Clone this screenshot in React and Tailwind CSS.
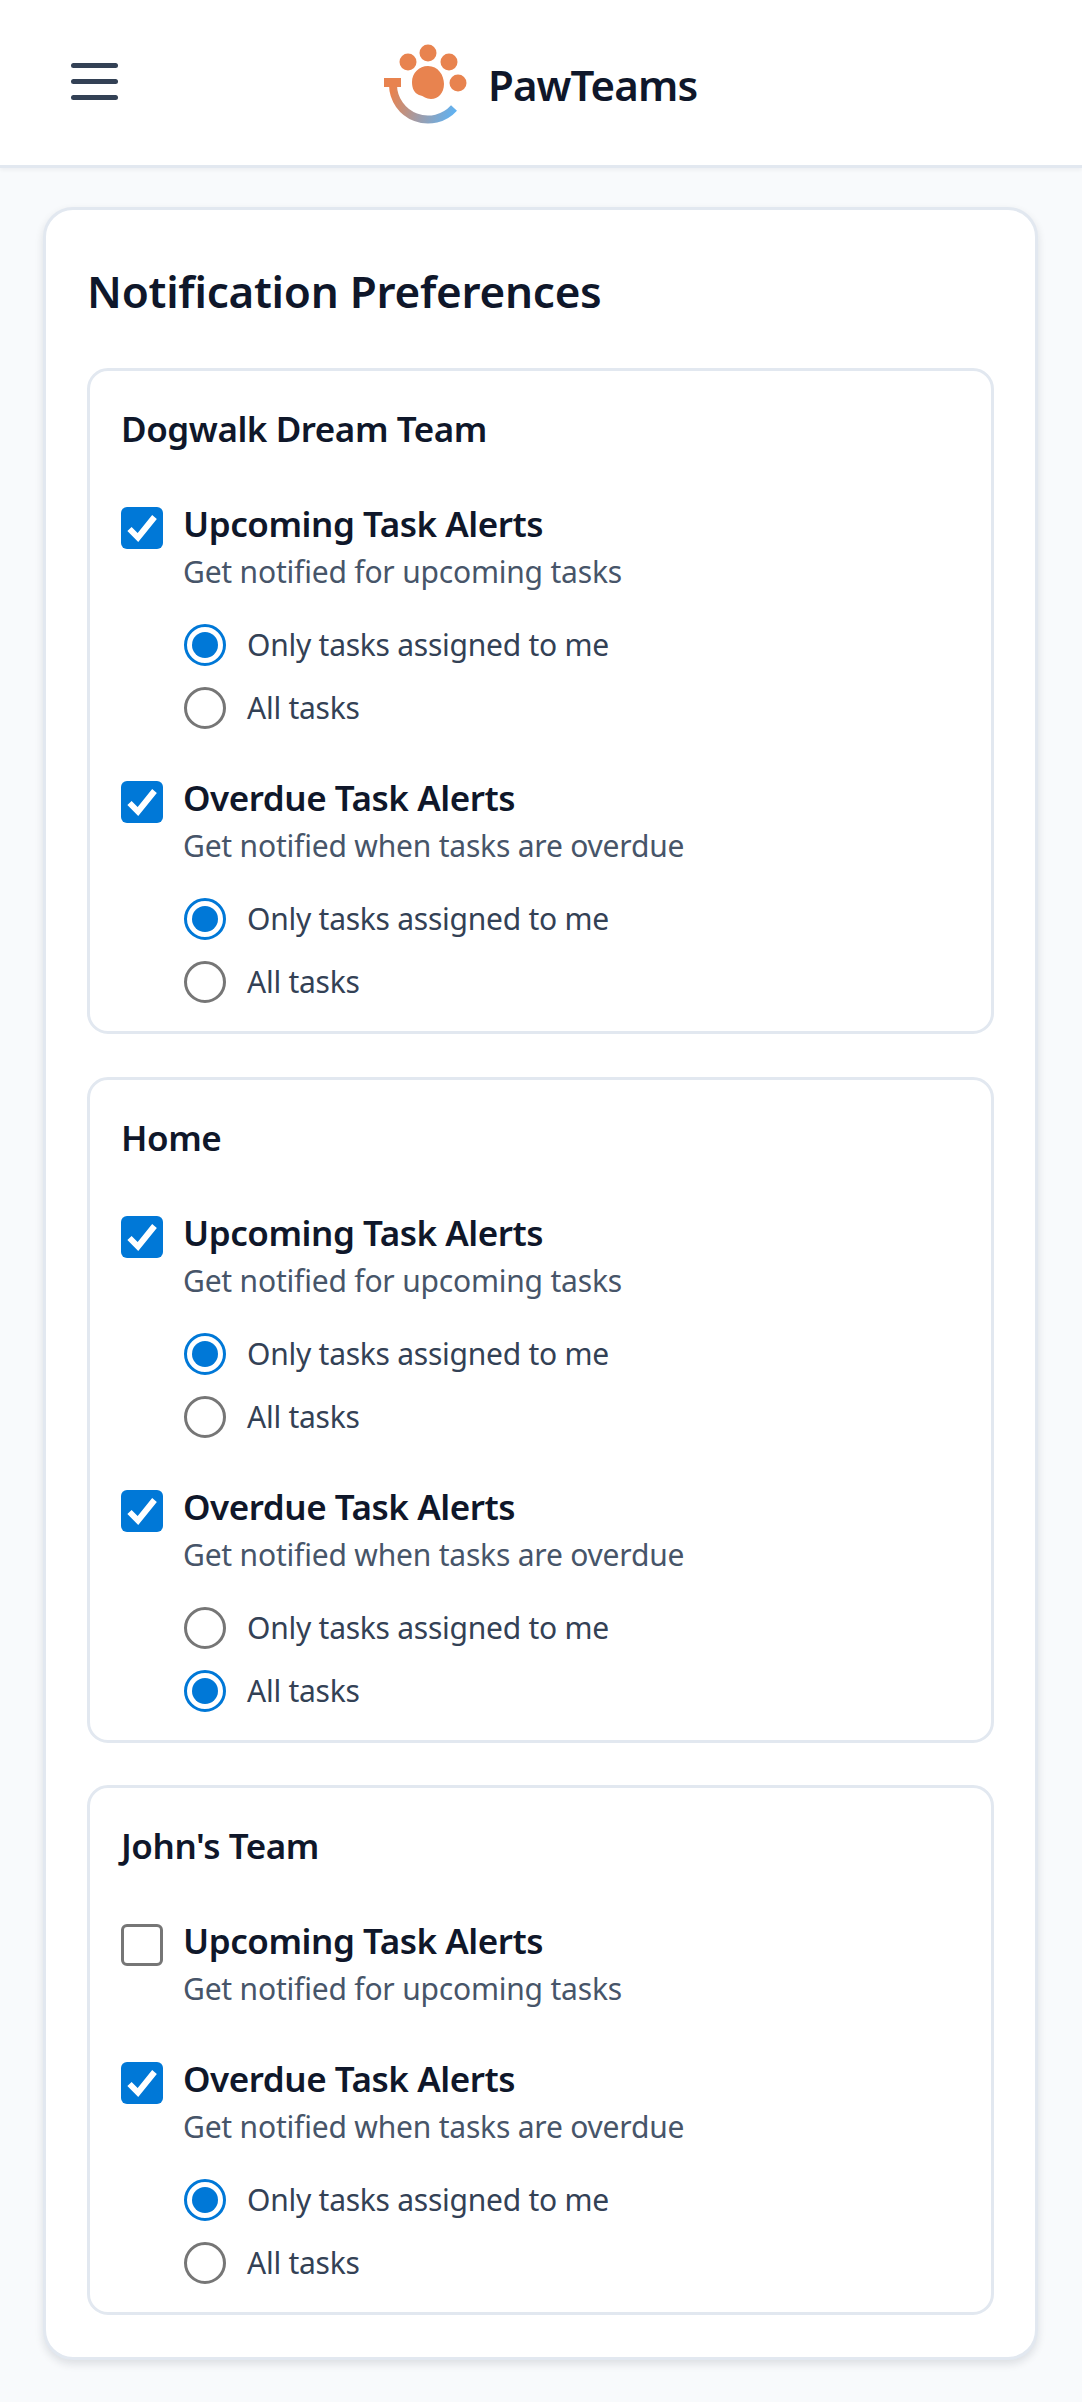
import React from "react";

const UPCOMING = { title: "Upcoming Task Alerts", desc: "Get notified for upcoming tasks" };
const OVERDUE = { title: "Overdue Task Alerts", desc: "Get notified when tasks are overdue" };

const TEAMS = [
  {
    name: "Dogwalk Dream Team",
    alerts: [
      { ...UPCOMING, on: true, scope: "mine" },
      { ...OVERDUE, on: true, scope: "mine" },
    ],
  },
  {
    name: "Home",
    alerts: [
      { ...UPCOMING, on: true, scope: "mine" },
      { ...OVERDUE, on: true, scope: "all" },
    ],
  },
  {
    name: "John's Team",
    alerts: [
      { ...UPCOMING, on: false, scope: null },
      { ...OVERDUE, on: true, scope: "mine" },
    ],
  },
];

function Logo() {
  return (
    <svg width="90" height="86" viewBox="380 38 90 86" className="shrink-0">
      <defs>
        <linearGradient id="arc" x1="392" y1="90" x2="455" y2="112" gradientUnits="userSpaceOnUse">
          <stop offset="0" stopColor="#e8834f" />
          <stop offset="0.5" stopColor="#a09ca8" />
          <stop offset="1" stopColor="#5fb2f2" />
        </linearGradient>
      </defs>
      <path d="M393 84 A35 35 0 0 0 454 107" fill="none" stroke="url(#arc)" strokeWidth="8" />
      <rect x="384" y="77" width="17" height="9" fill="#e8834f" />
      <circle cx="408" cy="61" r="8.5" fill="#e8834f" />
      <circle cx="428" cy="52" r="8.5" fill="#e8834f" />
      <circle cx="449" cy="61" r="8.5" fill="#e8834f" />
      <circle cx="458" cy="82" r="8.5" fill="#e8834f" />
      <path d="M428 65 C438 65 444 74 444 83 C444 92 438 98 431 98 C426 98 424 95 419 94 C414 92 412 87 412 81 C412 72 419 65 428 65 Z" fill="#e8834f" />
    </svg>
  );
}

function Checkbox({ on }) {
  if (!on) {
    return <div className="mt-[7px] w-[42px] h-[42px] shrink-0 rounded-[6px] border-[3px] border-[#767676] bg-white" />;
  }
  return (
    <div className="mt-[7px] w-[42px] h-[42px] shrink-0 rounded-[6px] bg-[#0078d7]">
      <svg width="42" height="42" viewBox="0 0 42 42">
        <path d="M8.5 22 L17 30.5 L33.5 10" fill="none" stroke="#fff" strokeWidth="6" />
      </svg>
    </div>
  );
}

function Radio({ on, label }) {
  return (
    <div className="flex items-center gap-[21px] h-[42px]">
      {on ? (
        <div className="w-[42px] h-[42px] rounded-full border-[3px] border-[#0078d7] flex items-center justify-center">
          <div className="w-[26px] h-[26px] rounded-full bg-[#0078d7]" />
        </div>
      ) : (
        <div className="w-[42px] h-[42px] rounded-full border-[3px] border-[#767676]" />
      )}
      <span className="text-[30px] leading-[42px] text-[#334155] tracking-[-0.25px]">{label}</span>
    </div>
  );
}

function Alert({ alert }) {
  return (
    <div className={alert.on ? "" : "mb-[-3px]"}>
      <div className="flex gap-[20px]">
        <Checkbox on={alert.on} />
        <div>
          <div className="text-[35px] leading-[48px] font-semibold text-[#0f172a] tracking-[-0.45px]">{alert.title}</div>
          <div className="text-[30px] leading-[48px] text-[#475569] tracking-[-0.2px]">{alert.desc}</div>
        </div>
      </div>
      {alert.on && (
        <div className="mt-[28px] ml-[63px] flex flex-col gap-[21px]">
          <Radio on={alert.scope === "mine"} label="Only tasks assigned to me" />
          <Radio on={alert.scope === "all"} label="All tasks" />
        </div>
      )}
    </div>
  );
}

export default function App() {
  return (
    <div className="w-[1082px] h-[2402px] bg-[#f8fafc] overflow-hidden font-['Noto_Sans',sans-serif]">
      {/* HEADER */}
      <header className="h-[168px] bg-white border-b-[3px] border-[#e2e8f0] shadow-[0_2px_4px_rgba(15,23,42,0.05)] flex items-center pl-[71px] pb-[2px]">
        <div className="w-[47px] flex flex-col gap-[10.5px]">
          <div className="h-[5.5px] rounded-full bg-[#334155]" />
          <div className="h-[5.5px] rounded-full bg-[#334155]" />
          <div className="h-[5.5px] rounded-full bg-[#334155]" />
        </div>
        <div className="ml-[262px] flex items-center">
          <Logo />
          <span className="ml-[18px] mt-[5px] text-[42px] font-semibold text-[#0f172a] tracking-[-0.9px]">PawTeams</span>
        </div>
      </header>

      {/* CARD */}
      <main className="mt-[39px] ml-[43px] mr-[44px] h-[2153px] bg-white border-[3px] border-[#e2e8f0] rounded-[30px] shadow-[0_4px_8px_rgba(15,23,42,0.12)] px-[41px] pt-[51px]">
        <h1 className="text-[44px] leading-[60px] font-semibold text-[#0f172a] tracking-[-0.25px]">Notification Preferences</h1>
        <div className="mt-[47px] flex flex-col gap-[42.5px]">
          {TEAMS.map(team => (
            <section key={team.name} className="border-[3px] border-[#e2e8f0] rounded-[21px] px-[31px] pt-[34px] pb-[28px]">
              <h2 className="text-[35px] leading-[48px] font-semibold text-[#0f172a] tracking-[-0.45px]">{team.name}</h2>
              <div className="mt-[47px] flex flex-col gap-[45px]">
                {team.alerts.map(a => <Alert key={a.title} alert={a} />)}
              </div>
            </section>
          ))}
        </div>
      </main>
    </div>
  );
}
